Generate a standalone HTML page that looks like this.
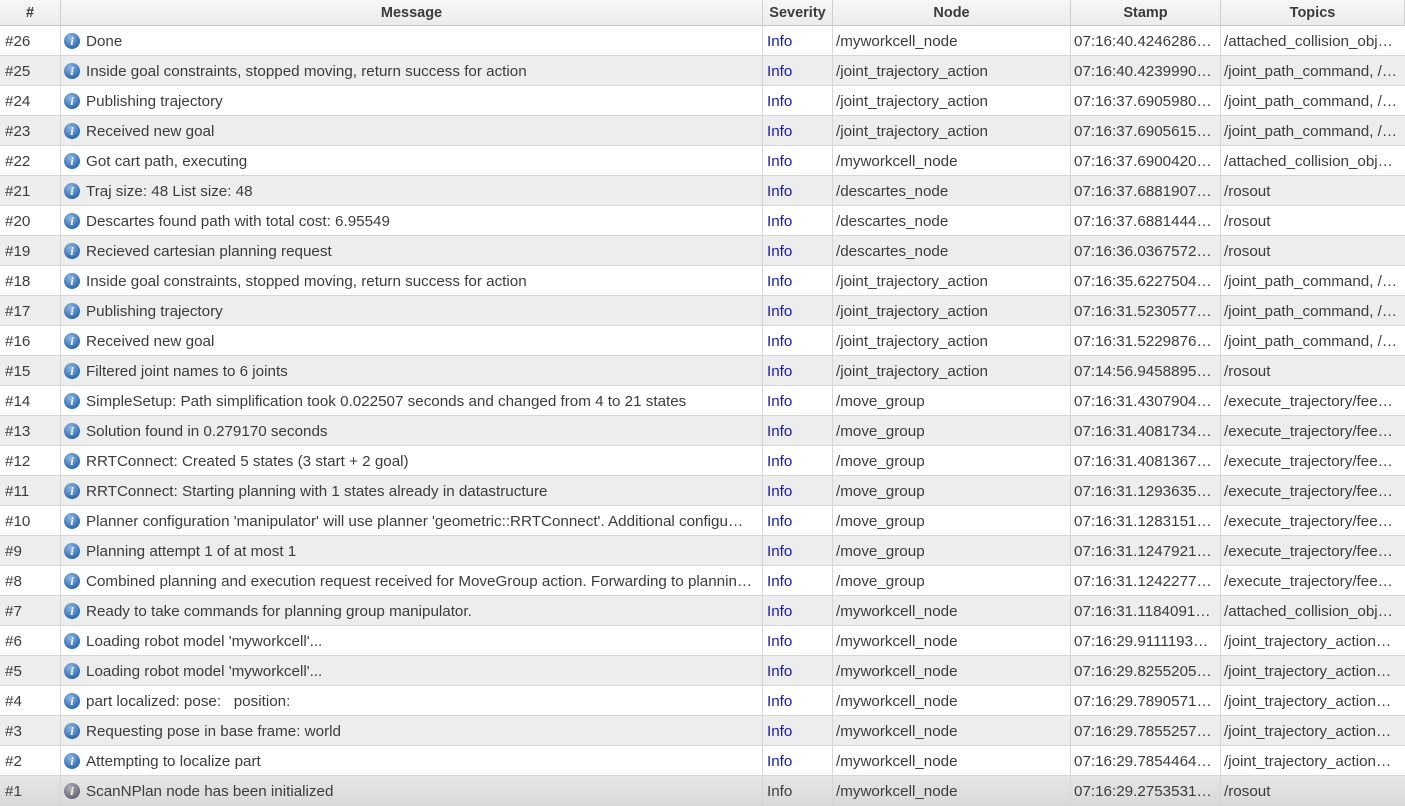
<!DOCTYPE html><html><head><meta charset="utf-8"><style>
body{margin:0;width:1405px;height:806px;overflow:hidden;background:#fff;font-family:"Liberation Sans",sans-serif;font-size:15.2px;color:#3c3c3c}
.r{position:absolute;left:0;width:1405px;height:30px;border-bottom:1px solid #d6d6d6;box-sizing:border-box}
.r.a{background:#ededed}
.r.s{background:linear-gradient(#e6e6e6,#d9d9d9)}
.c{position:absolute;top:0;height:100%;line-height:32px;white-space:nowrap;overflow:hidden;border-right:1px solid #d6d6d6;box-sizing:border-box}
.h{position:absolute;top:0;left:0;width:1405px;height:26px;background:linear-gradient(#f7f7f7,#ebebeb);border-bottom:1px solid #c4c4c4;box-sizing:border-box;font-size:14.5px}
.h .c{line-height:27px;text-align:center;font-weight:bold;color:#3c3c3c;border-right:1px solid #cfcfcf}
.c0{left:0;width:61px;padding-left:5px}
.c1{left:61px;width:702px;padding-left:25px}
.c2{left:763px;width:70px;padding-left:4px;color:#1a1aa8}
.c3{left:833px;width:238px;padding-left:3px}
.c4{left:1071px;width:150px;padding-left:3px}
.c5{left:1221px;width:184px;padding-left:3px;border-right:none}
.h .c0,.h .c1,.h .c2,.h .c3,.h .c4,.h .c5{padding:0}
.i{position:absolute;left:3px;top:7px;width:16px;height:16px;border-radius:50%;background:radial-gradient(circle at 40% 30%,#8fb8e6,#2f6cb4 70%,#1f4f8f);color:#fff;font:italic bold 12px "Liberation Serif",serif;text-align:center;line-height:16px}
.s .i{background:radial-gradient(circle at 40% 30%,#b0b0b8,#6a6a78 70%,#55555f)}
.s .c2{color:#3c3c3c}
</style></head><body>
<div class="h"><div class="c c0">#</div><div class="c c1">Message</div><div class="c c2" style="color:#3c3c3c">Severity</div><div class="c c3">Node</div><div class="c c4">Stamp</div><div class="c c5">Topics</div></div>
<div class="r" style="top:26px"><div class="c c0">#26</div><div class="c c1"><span class="i">i</span>Done</div><div class="c c2">Info</div><div class="c c3">/myworkcell_node</div><div class="c c4">07:16:40.4246286…</div><div class="c c5">/attached_collision_obj…</div></div>
<div class="r a" style="top:56px"><div class="c c0">#25</div><div class="c c1"><span class="i">i</span>Inside goal constraints, stopped moving, return success for action</div><div class="c c2">Info</div><div class="c c3">/joint_trajectory_action</div><div class="c c4">07:16:40.4239990…</div><div class="c c5">/joint_path_command, /…</div></div>
<div class="r" style="top:86px"><div class="c c0">#24</div><div class="c c1"><span class="i">i</span>Publishing trajectory</div><div class="c c2">Info</div><div class="c c3">/joint_trajectory_action</div><div class="c c4">07:16:37.6905980…</div><div class="c c5">/joint_path_command, /…</div></div>
<div class="r a" style="top:116px"><div class="c c0">#23</div><div class="c c1"><span class="i">i</span>Received new goal</div><div class="c c2">Info</div><div class="c c3">/joint_trajectory_action</div><div class="c c4">07:16:37.6905615…</div><div class="c c5">/joint_path_command, /…</div></div>
<div class="r" style="top:146px"><div class="c c0">#22</div><div class="c c1"><span class="i">i</span>Got cart path, executing</div><div class="c c2">Info</div><div class="c c3">/myworkcell_node</div><div class="c c4">07:16:37.6900420…</div><div class="c c5">/attached_collision_obj…</div></div>
<div class="r a" style="top:176px"><div class="c c0">#21</div><div class="c c1"><span class="i">i</span>Traj size: 48 List size: 48</div><div class="c c2">Info</div><div class="c c3">/descartes_node</div><div class="c c4">07:16:37.6881907…</div><div class="c c5">/rosout</div></div>
<div class="r" style="top:206px"><div class="c c0">#20</div><div class="c c1"><span class="i">i</span>Descartes found path with total cost: 6.95549</div><div class="c c2">Info</div><div class="c c3">/descartes_node</div><div class="c c4">07:16:37.6881444…</div><div class="c c5">/rosout</div></div>
<div class="r a" style="top:236px"><div class="c c0">#19</div><div class="c c1"><span class="i">i</span>Recieved cartesian planning request</div><div class="c c2">Info</div><div class="c c3">/descartes_node</div><div class="c c4">07:16:36.0367572…</div><div class="c c5">/rosout</div></div>
<div class="r" style="top:266px"><div class="c c0">#18</div><div class="c c1"><span class="i">i</span>Inside goal constraints, stopped moving, return success for action</div><div class="c c2">Info</div><div class="c c3">/joint_trajectory_action</div><div class="c c4">07:16:35.6227504…</div><div class="c c5">/joint_path_command, /…</div></div>
<div class="r a" style="top:296px"><div class="c c0">#17</div><div class="c c1"><span class="i">i</span>Publishing trajectory</div><div class="c c2">Info</div><div class="c c3">/joint_trajectory_action</div><div class="c c4">07:16:31.5230577…</div><div class="c c5">/joint_path_command, /…</div></div>
<div class="r" style="top:326px"><div class="c c0">#16</div><div class="c c1"><span class="i">i</span>Received new goal</div><div class="c c2">Info</div><div class="c c3">/joint_trajectory_action</div><div class="c c4">07:16:31.5229876…</div><div class="c c5">/joint_path_command, /…</div></div>
<div class="r a" style="top:356px"><div class="c c0">#15</div><div class="c c1"><span class="i">i</span>Filtered joint names to 6 joints</div><div class="c c2">Info</div><div class="c c3">/joint_trajectory_action</div><div class="c c4">07:14:56.9458895…</div><div class="c c5">/rosout</div></div>
<div class="r" style="top:386px"><div class="c c0">#14</div><div class="c c1"><span class="i">i</span>SimpleSetup: Path simplification took 0.022507 seconds and changed from 4 to 21 states</div><div class="c c2">Info</div><div class="c c3">/move_group</div><div class="c c4">07:16:31.4307904…</div><div class="c c5">/execute_trajectory/fee…</div></div>
<div class="r a" style="top:416px"><div class="c c0">#13</div><div class="c c1"><span class="i">i</span>Solution found in 0.279170 seconds</div><div class="c c2">Info</div><div class="c c3">/move_group</div><div class="c c4">07:16:31.4081734…</div><div class="c c5">/execute_trajectory/fee…</div></div>
<div class="r" style="top:446px"><div class="c c0">#12</div><div class="c c1"><span class="i">i</span>RRTConnect: Created 5 states (3 start + 2 goal)</div><div class="c c2">Info</div><div class="c c3">/move_group</div><div class="c c4">07:16:31.4081367…</div><div class="c c5">/execute_trajectory/fee…</div></div>
<div class="r a" style="top:476px"><div class="c c0">#11</div><div class="c c1"><span class="i">i</span>RRTConnect: Starting planning with 1 states already in datastructure</div><div class="c c2">Info</div><div class="c c3">/move_group</div><div class="c c4">07:16:31.1293635…</div><div class="c c5">/execute_trajectory/fee…</div></div>
<div class="r" style="top:506px"><div class="c c0">#10</div><div class="c c1"><span class="i">i</span>Planner configuration 'manipulator' will use planner 'geometric::RRTConnect'. Additional configu…</div><div class="c c2">Info</div><div class="c c3">/move_group</div><div class="c c4">07:16:31.1283151…</div><div class="c c5">/execute_trajectory/fee…</div></div>
<div class="r a" style="top:536px"><div class="c c0">#9</div><div class="c c1"><span class="i">i</span>Planning attempt 1 of at most 1</div><div class="c c2">Info</div><div class="c c3">/move_group</div><div class="c c4">07:16:31.1247921…</div><div class="c c5">/execute_trajectory/fee…</div></div>
<div class="r" style="top:566px"><div class="c c0">#8</div><div class="c c1"><span class="i">i</span>Combined planning and execution request received for MoveGroup action. Forwarding to plannin…</div><div class="c c2">Info</div><div class="c c3">/move_group</div><div class="c c4">07:16:31.1242277…</div><div class="c c5">/execute_trajectory/fee…</div></div>
<div class="r a" style="top:596px"><div class="c c0">#7</div><div class="c c1"><span class="i">i</span>Ready to take commands for planning group manipulator.</div><div class="c c2">Info</div><div class="c c3">/myworkcell_node</div><div class="c c4">07:16:31.1184091…</div><div class="c c5">/attached_collision_obj…</div></div>
<div class="r" style="top:626px"><div class="c c0">#6</div><div class="c c1"><span class="i">i</span>Loading robot model 'myworkcell'...</div><div class="c c2">Info</div><div class="c c3">/myworkcell_node</div><div class="c c4">07:16:29.9111193…</div><div class="c c5">/joint_trajectory_action…</div></div>
<div class="r a" style="top:656px"><div class="c c0">#5</div><div class="c c1"><span class="i">i</span>Loading robot model 'myworkcell'...</div><div class="c c2">Info</div><div class="c c3">/myworkcell_node</div><div class="c c4">07:16:29.8255205…</div><div class="c c5">/joint_trajectory_action…</div></div>
<div class="r" style="top:686px"><div class="c c0">#4</div><div class="c c1"><span class="i">i</span>part localized: pose: &nbsp; position:</div><div class="c c2">Info</div><div class="c c3">/myworkcell_node</div><div class="c c4">07:16:29.7890571…</div><div class="c c5">/joint_trajectory_action…</div></div>
<div class="r a" style="top:716px"><div class="c c0">#3</div><div class="c c1"><span class="i">i</span>Requesting pose in base frame: world</div><div class="c c2">Info</div><div class="c c3">/myworkcell_node</div><div class="c c4">07:16:29.7855257…</div><div class="c c5">/joint_trajectory_action…</div></div>
<div class="r" style="top:746px"><div class="c c0">#2</div><div class="c c1"><span class="i">i</span>Attempting to localize part</div><div class="c c2">Info</div><div class="c c3">/myworkcell_node</div><div class="c c4">07:16:29.7854464…</div><div class="c c5">/joint_trajectory_action…</div></div>
<div class="r s" style="top:776px"><div class="c c0">#1</div><div class="c c1"><span class="i">i</span>ScanNPlan node has been initialized</div><div class="c c2">Info</div><div class="c c3">/myworkcell_node</div><div class="c c4">07:16:29.2753531…</div><div class="c c5">/rosout</div></div>
</body></html>
